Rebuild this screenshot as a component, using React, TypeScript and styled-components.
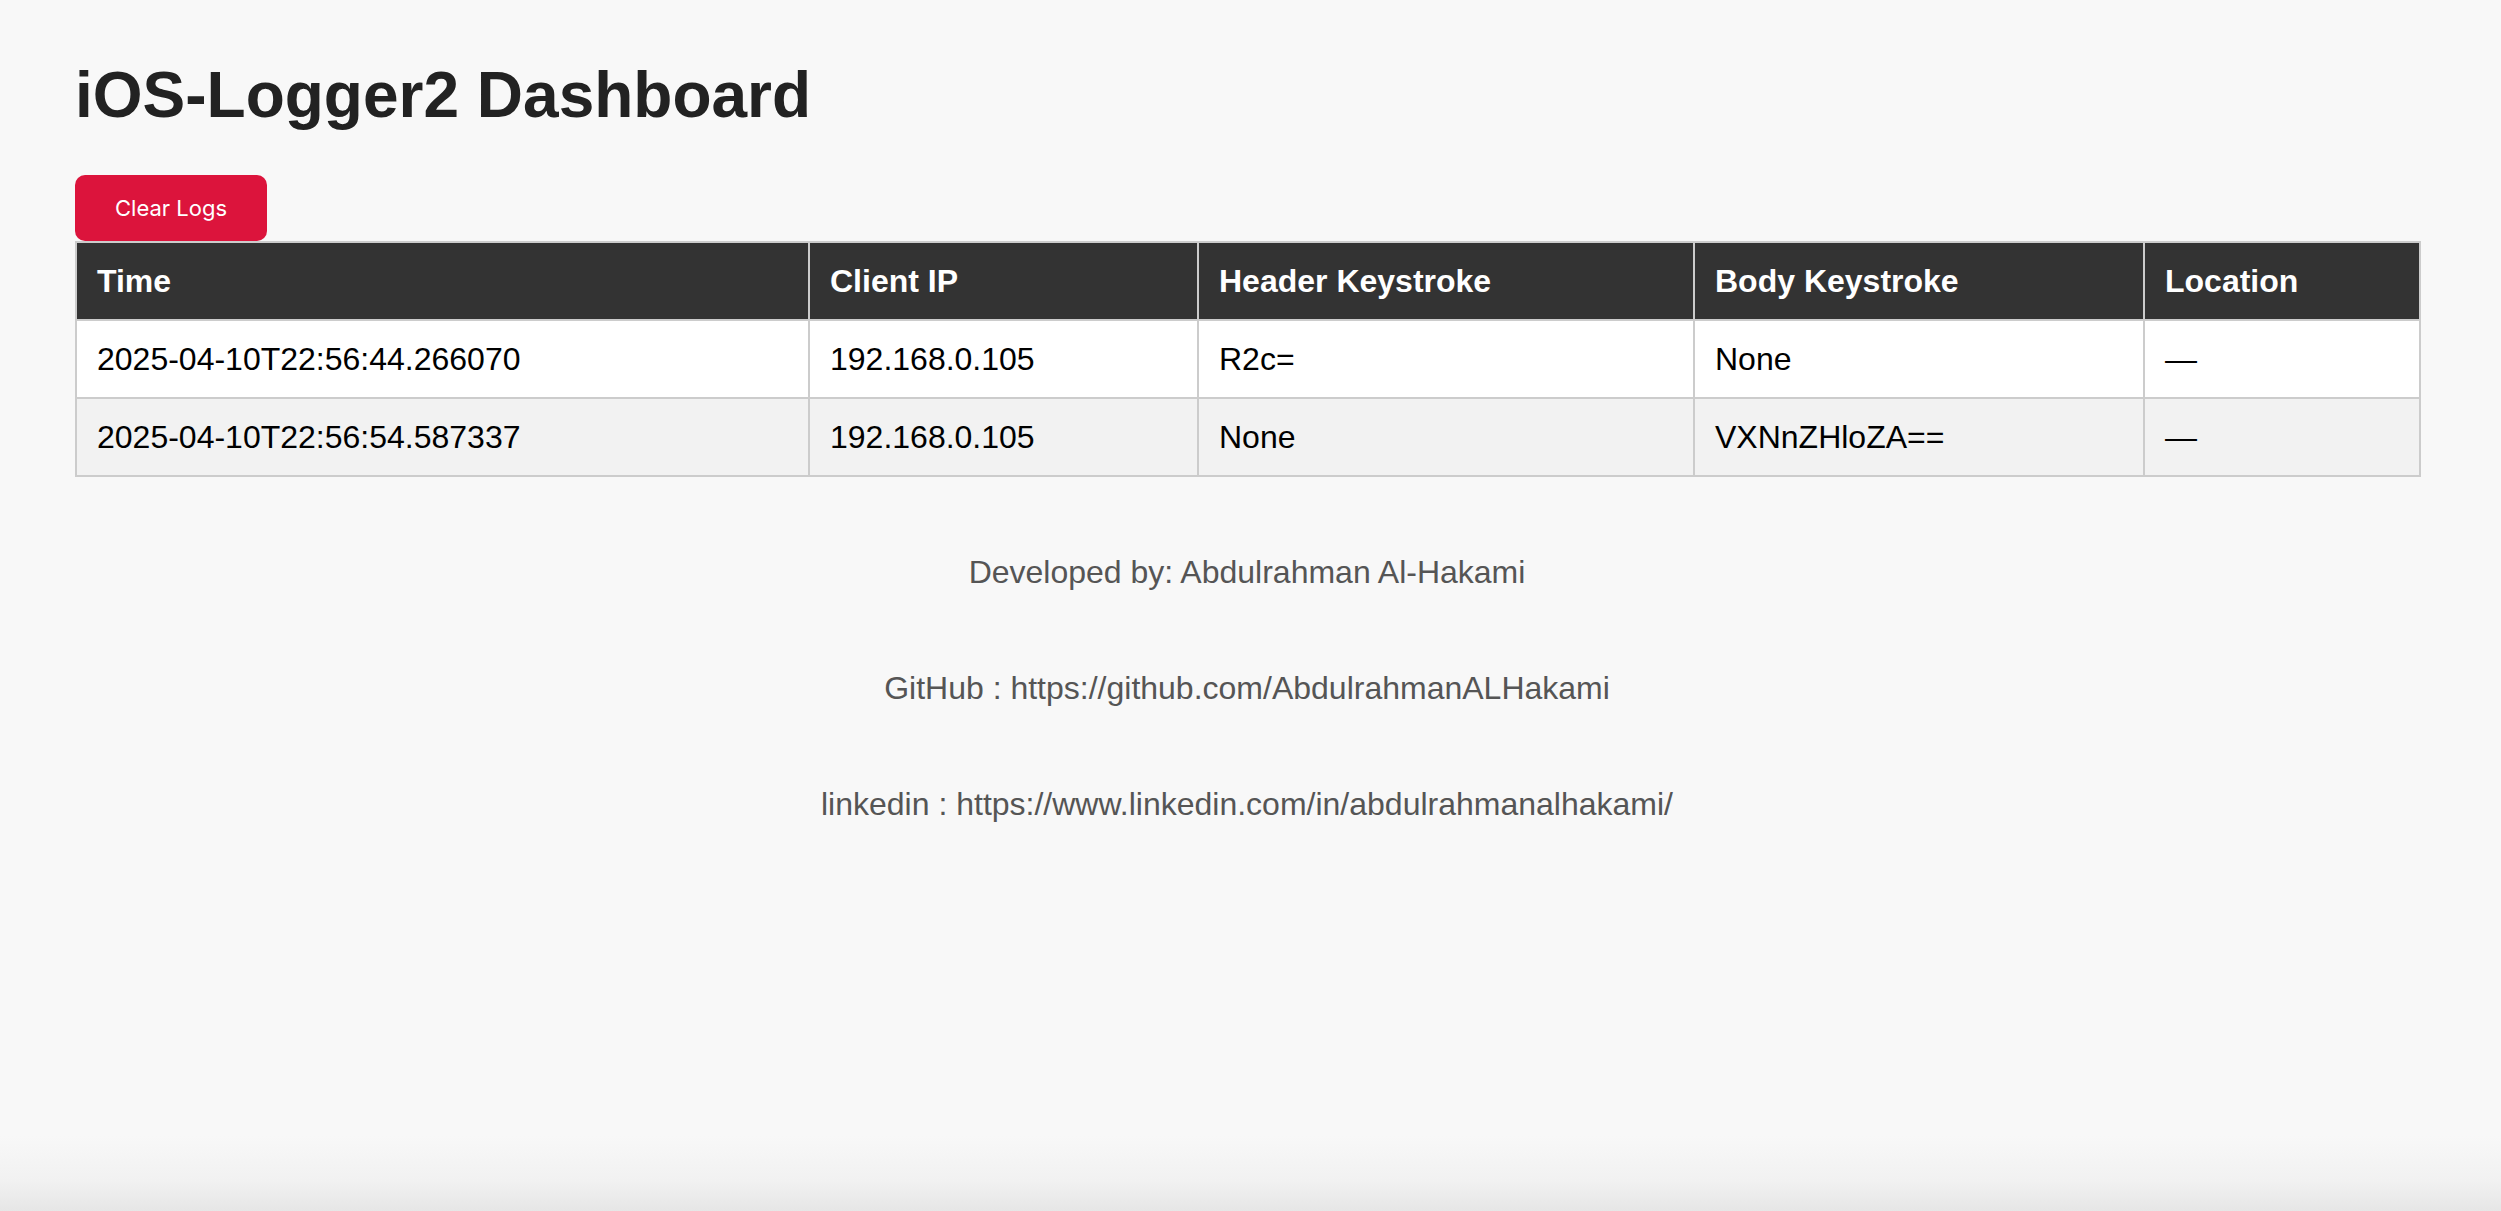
import React from "react";
import styled, { createGlobalStyle } from "styled-components";

const GlobalStyle = createGlobalStyle`
  html, body {
    margin: 0;
    padding: 0;
    background: #f8f8f8;
  }
  body {
    font-family: "Liberation Sans", Arial, Helvetica, sans-serif;
  }
  * { box-sizing: border-box; }
`;

const Page = styled.div`
  min-height: 100vh;
  padding: 58px 82px 0 75px;
  background: linear-gradient(
    to bottom,
    #f8f8f8 0,
    #f8f8f8 calc(100% - 75px),
    #f1f1f1 calc(100% - 30px),
    #e6e6e6 100%
  );
`;

const Title = styled.h1`
  margin: 0 0 43px;
  font-size: 64px;
  font-weight: bold;
  color: #222;
  line-height: normal;
`;

const ClearButton = styled.button`
  display: block;
  margin: 0;
  padding: 18px 40px;
  border: none;
  border-radius: 10px;
  background: #dc143c;
  color: #fff;
  font-family: Inter, "Noto Sans", sans-serif;
  font-size: 22px;
  line-height: 30px;
  cursor: pointer;
`;

const Table = styled.table`
  width: 100%;
  table-layout: fixed;
  border-collapse: collapse;
  background: #fff;
  font-size: 32px;
  color: #000;
`;

const Col = styled.col<{ $w: number }>`
  width: ${(p) => p.$w}px;
`;

const HeadCell = styled.th`
  background: #333;
  color: #fff;
  text-align: left;
  font-weight: bold;
  padding: 19.5px 20px;
  border: 2px solid #ccc;
  line-height: normal;
`;

const Row = styled.tr<{ $alt?: boolean }>`
  background: ${(p) => (p.$alt ? "#f2f2f2" : "#fff")};
`;

const Cell = styled.td`
  padding: 19.5px 20px;
  border: 2px solid #ccc;
  line-height: normal;
  white-space: nowrap;
`;

const Footer = styled.div`
  margin-top: 77px;
  display: flex;
  flex-direction: column;
  align-items: center;
  gap: 79px;
  color: #555;
  font-size: 32px;
  line-height: normal;
`;

const FooterLine = styled.p`
  margin: 0;
  text-align: center;
`;

const columns = [
  { label: "Time", w: 733 },
  { label: "Client IP", w: 389 },
  { label: "Header Keystroke", w: 496 },
  { label: "Body Keystroke", w: 450 },
  { label: "Location", w: 276 },
];

const rows = [
  ["2025-04-10T22:56:44.266070", "192.168.0.105", "R2c=", "None", "—"],
  ["2025-04-10T22:56:54.587337", "192.168.0.105", "None", "VXNnZHloZA==", "—"],
];

export default function App() {
  return (
    <>
      <GlobalStyle />
      <Page>
        <Title>iOS-Logger2 Dashboard</Title>
        <ClearButton>Clear Logs</ClearButton>
        <Table>
          <colgroup>
            {columns.map((c) => (
              <Col key={c.label} $w={c.w} />
            ))}
          </colgroup>
          <thead>
            <tr>
              {columns.map((c) => (
                <HeadCell key={c.label}>{c.label}</HeadCell>
              ))}
            </tr>
          </thead>
          <tbody>
            {rows.map((r, i) => (
              <Row key={i} $alt={i % 2 === 1}>
                {r.map((v, j) => (
                  <Cell key={j}>{v}</Cell>
                ))}
              </Row>
            ))}
          </tbody>
        </Table>
        <Footer>
          <FooterLine>Developed by: Abdulrahman Al-Hakami</FooterLine>
          <FooterLine>GitHub : https://github.com/AbdulrahmanALHakami</FooterLine>
          <FooterLine>linkedin : https://www.linkedin.com/in/abdulrahmanalhakami/</FooterLine>
        </Footer>
      </Page>
    </>
  );
}
